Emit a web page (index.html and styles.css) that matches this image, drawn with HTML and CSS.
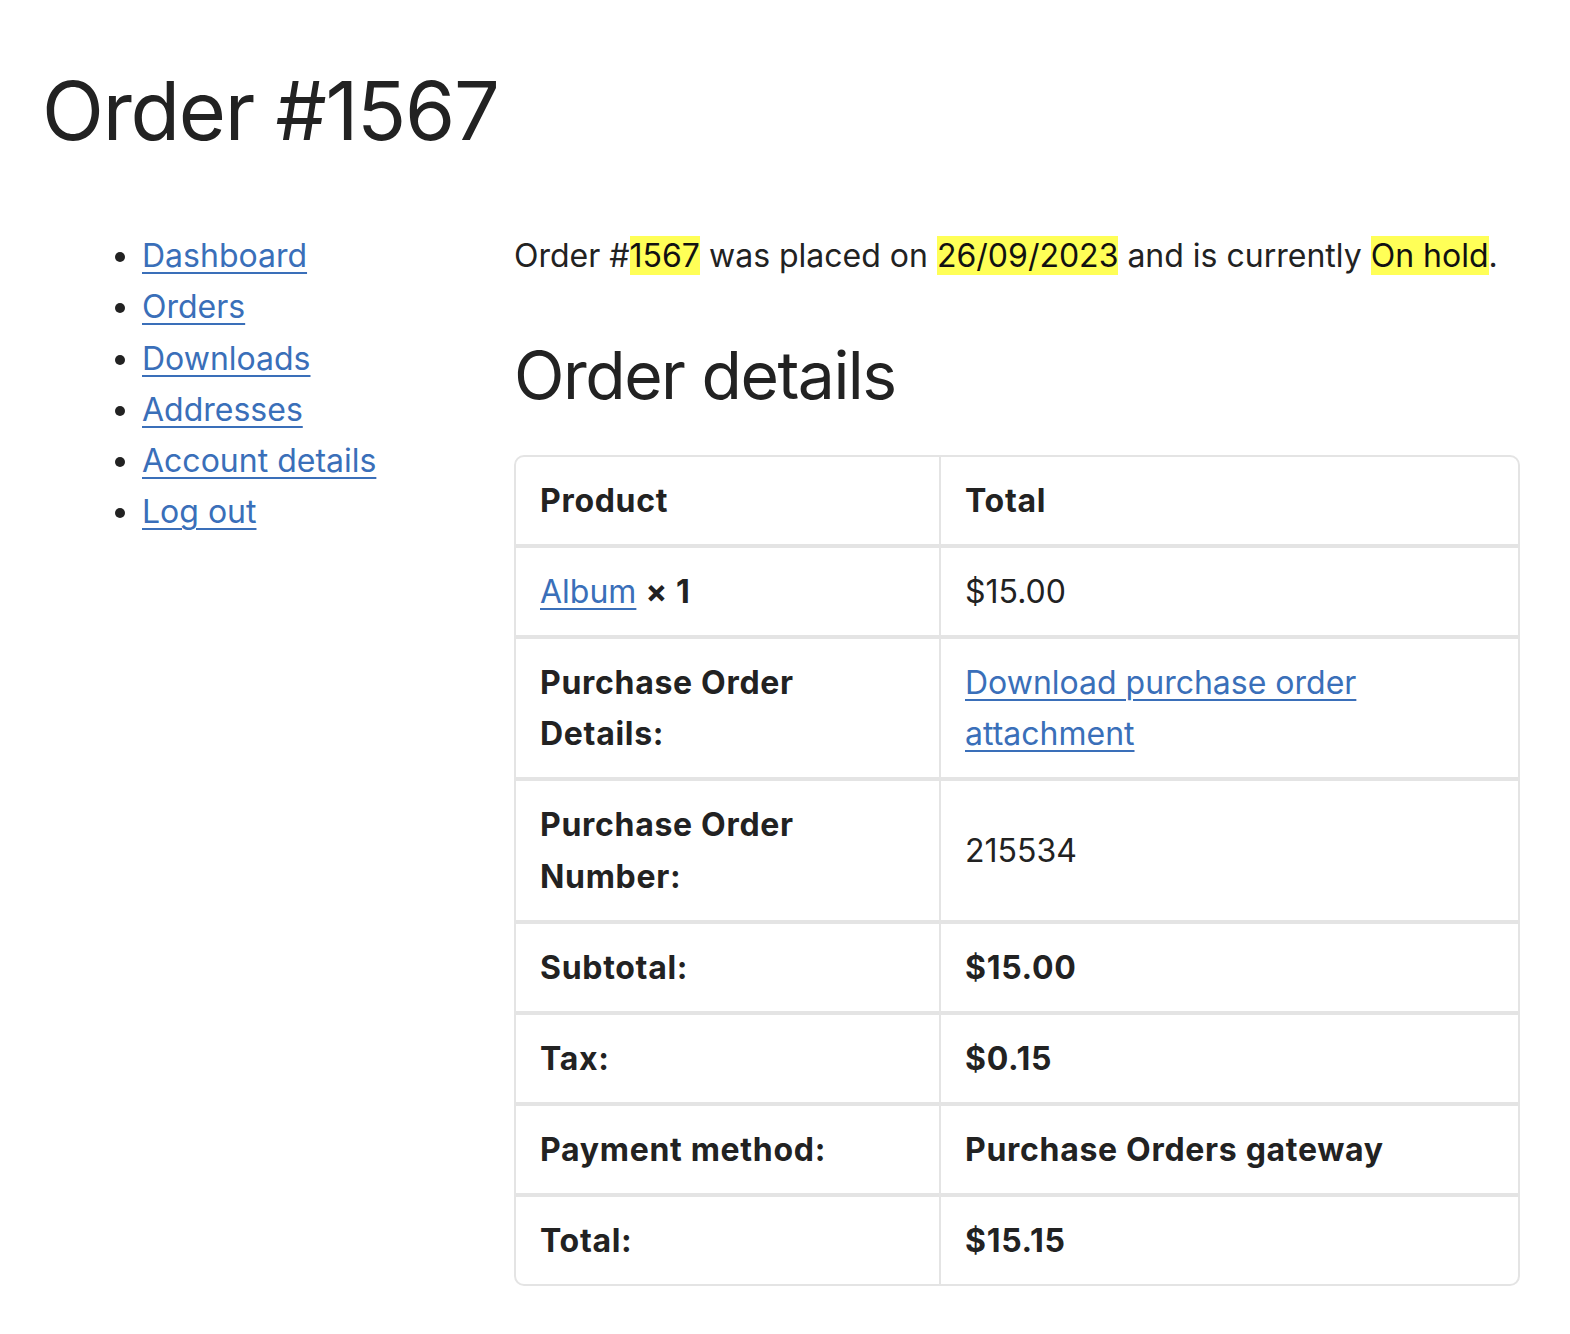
FILE: index.html
```html
<!DOCTYPE html>
<html lang="en">
<head>
<meta charset="utf-8">
<title>Order #1567</title>
<link rel="stylesheet" href="styles.css">
</head>
<body>
<h1 class="page-title">Order #1567</h1>
<div class="account">
  <nav class="account-nav">
    <ul class="nav-list">
      <li><a href="#">Dashboard</a></li>
      <li><a href="#">Orders</a></li>
      <li><a href="#">Downloads</a></li>
      <li><a href="#">Addresses</a></li>
      <li><a href="#">Account details</a></li>
      <li><a href="#">Log out</a></li>
    </ul>
  </nav>
  <main class="account-content">
    <p class="order-summary">Order #<mark>1567</mark> was placed on <mark>26/09/2023</mark> and is currently <mark>On hold</mark>.</p>
    <h2 class="section-title">Order details</h2>
    <table class="order-table">
      <colgroup><col class="col-label"><col></colgroup>
      <thead>
        <tr><th>Product</th><th>Total</th></tr>
      </thead>
      <tbody>
        <tr><td><a href="#">Album</a> <strong>×&nbsp;1</strong></td><td>$15.00</td></tr>
        <tr><th>Purchase Order Details:</th><td><a href="#">Download purchase order attachment</a></td></tr>
        <tr><th>Purchase Order Number:</th><td>215534</td></tr>
      </tbody>
      <tfoot>
        <tr><th>Subtotal:</th><td class="strong">$15.00</td></tr>
        <tr><th>Tax:</th><td class="strong">$0.15</td></tr>
        <tr><th>Payment method:</th><td class="strong">Purchase Orders gateway</td></tr>
        <tr><th>Total:</th><td class="strong">$15.15</td></tr>
      </tfoot>
    </table>
  </main>
</div>
</body>
</html>
```
FILE: styles.css
```css
html, body {
  margin: 0;
  padding: 0;
  background: #ffffff;
}
body {
  font-family: Inter, "Noto Sans", "Liberation Sans", sans-serif;
  font-size: 32px;
  line-height: 1.6;
  color: #222222;
}
a {
  color: #3a6fb9;
  text-decoration: underline;
  text-decoration-thickness: 2px;
  text-underline-offset: 5px;
}
.page-title {
  margin: 63px 0 0 42px;
  font-size: 81px;
  font-weight: 400;
  line-height: 1.2;
  letter-spacing: -1.3px;
}
.account {
  display: flex;
  padding: 70px 50px 0 42px;
}
.account-nav {
  width: 472px;
  flex: none;
}
.nav-list {
  margin: 0;
  padding: 0 0 0 100px;
}
.account-content {
  flex: 1;
  min-width: 0;
}
.order-summary {
  margin: 0;
}
mark {
  background: #ffff57;
  color: #111111;
}
.section-title {
  margin: 55px 0 39px;
  font-size: 66px;
  font-weight: 400;
  line-height: 1.2;
  letter-spacing: -1.5px;
}
.order-table {
  width: 100%;
  border: 2px solid #e4e4e4;
  border-radius: 10px;
  border-collapse: separate;
  border-spacing: 0;
  table-layout: fixed;
  text-align: left;
}
.col-label {
  width: 423px;
}
.order-table th,
.order-table td {
  padding: 18px 24px;
  vertical-align: middle;
  text-align: left;
}
.order-table th {
  font-weight: 700;
  letter-spacing: 0.7px;
}
.order-table strong,
.order-table .strong {
  font-weight: 700;
  letter-spacing: 0.7px;
}
.order-table td:last-child,
.order-table th:last-child {
  border-left: 2px solid #e4e4e4;
}
.order-table tbody td,
.order-table tbody th,
.order-table tfoot td,
.order-table tfoot th {
  border-top: 4px solid #e4e4e4;
}
```
